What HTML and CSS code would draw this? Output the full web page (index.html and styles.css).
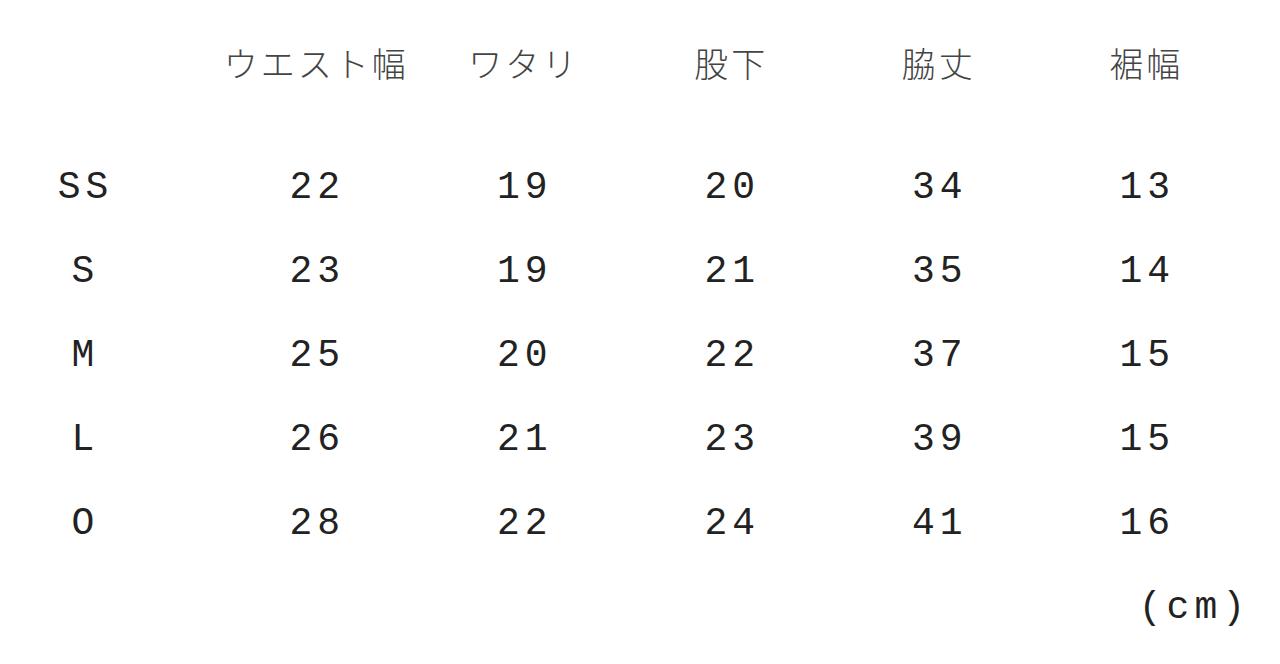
FILE: index.html
```html
<!DOCTYPE html>
<html lang="ja">
<head>
<meta charset="utf-8">
<title>サイズ表</title>
<link rel="stylesheet" href="styles.css">
</head>
<body>
<div class="sheet">
  <div class="row head">
    <div class="cell label"></div>
    <div class="cell">ウエスト幅</div>
    <div class="cell">ワタリ</div>
    <div class="cell">股下</div>
    <div class="cell">脇丈</div>
    <div class="cell">裾幅</div>
  </div>
  <div class="row">
    <div class="cell label">SS</div>
    <div class="cell">22</div><div class="cell">19</div><div class="cell">20</div><div class="cell">34</div><div class="cell">13</div>
  </div>
  <div class="row">
    <div class="cell label">S</div>
    <div class="cell">23</div><div class="cell">19</div><div class="cell">21</div><div class="cell">35</div><div class="cell">14</div>
  </div>
  <div class="row">
    <div class="cell label">M</div>
    <div class="cell">25</div><div class="cell">20</div><div class="cell">22</div><div class="cell">37</div><div class="cell">15</div>
  </div>
  <div class="row">
    <div class="cell label">L</div>
    <div class="cell">26</div><div class="cell">21</div><div class="cell">23</div><div class="cell">39</div><div class="cell">15</div>
  </div>
  <div class="row">
    <div class="cell label">O</div>
    <div class="cell">28</div><div class="cell">22</div><div class="cell">24</div><div class="cell">41</div><div class="cell">16</div>
  </div>
  <div class="unit">(cm)</div>
</div>
</body>
</html>
```
FILE: styles.css
```css
html, body {
  margin: 0;
  padding: 0;
  background: #ffffff;
}

.sheet {
  width: 1280px;
  height: 664px;
  padding-top: 21px;
  box-sizing: border-box;
  font-family: "Liberation Mono", "DejaVu Sans Mono", monospace;
  color: #222222;
}

.row {
  display: grid;
  grid-template-columns: 211px repeat(5, 207.5px);
  height: 84px;
  align-items: center;
  font-size: 38px;
  letter-spacing: 5px;
}

.cell {
  text-align: center;
  line-height: 1;
  padding-left: 5px;
}

.label {
  padding-right: 45px;
  padding-left: 5px;
}

.head {
  margin-bottom: 41px;
  font-family: "Noto Sans CJK JP", "Noto Sans", sans-serif;
  font-weight: 300;
  font-size: 34px;
  letter-spacing: 3px;
  color: #444444;
}

.head .cell {
  padding-left: 3px;
}

.unit {
  height: 84px;
  display: flex;
  align-items: center;
  justify-content: flex-end;
  padding-right: 30px;
  font-size: 38px;
  letter-spacing: 5px;
  line-height: 1;
}
```
